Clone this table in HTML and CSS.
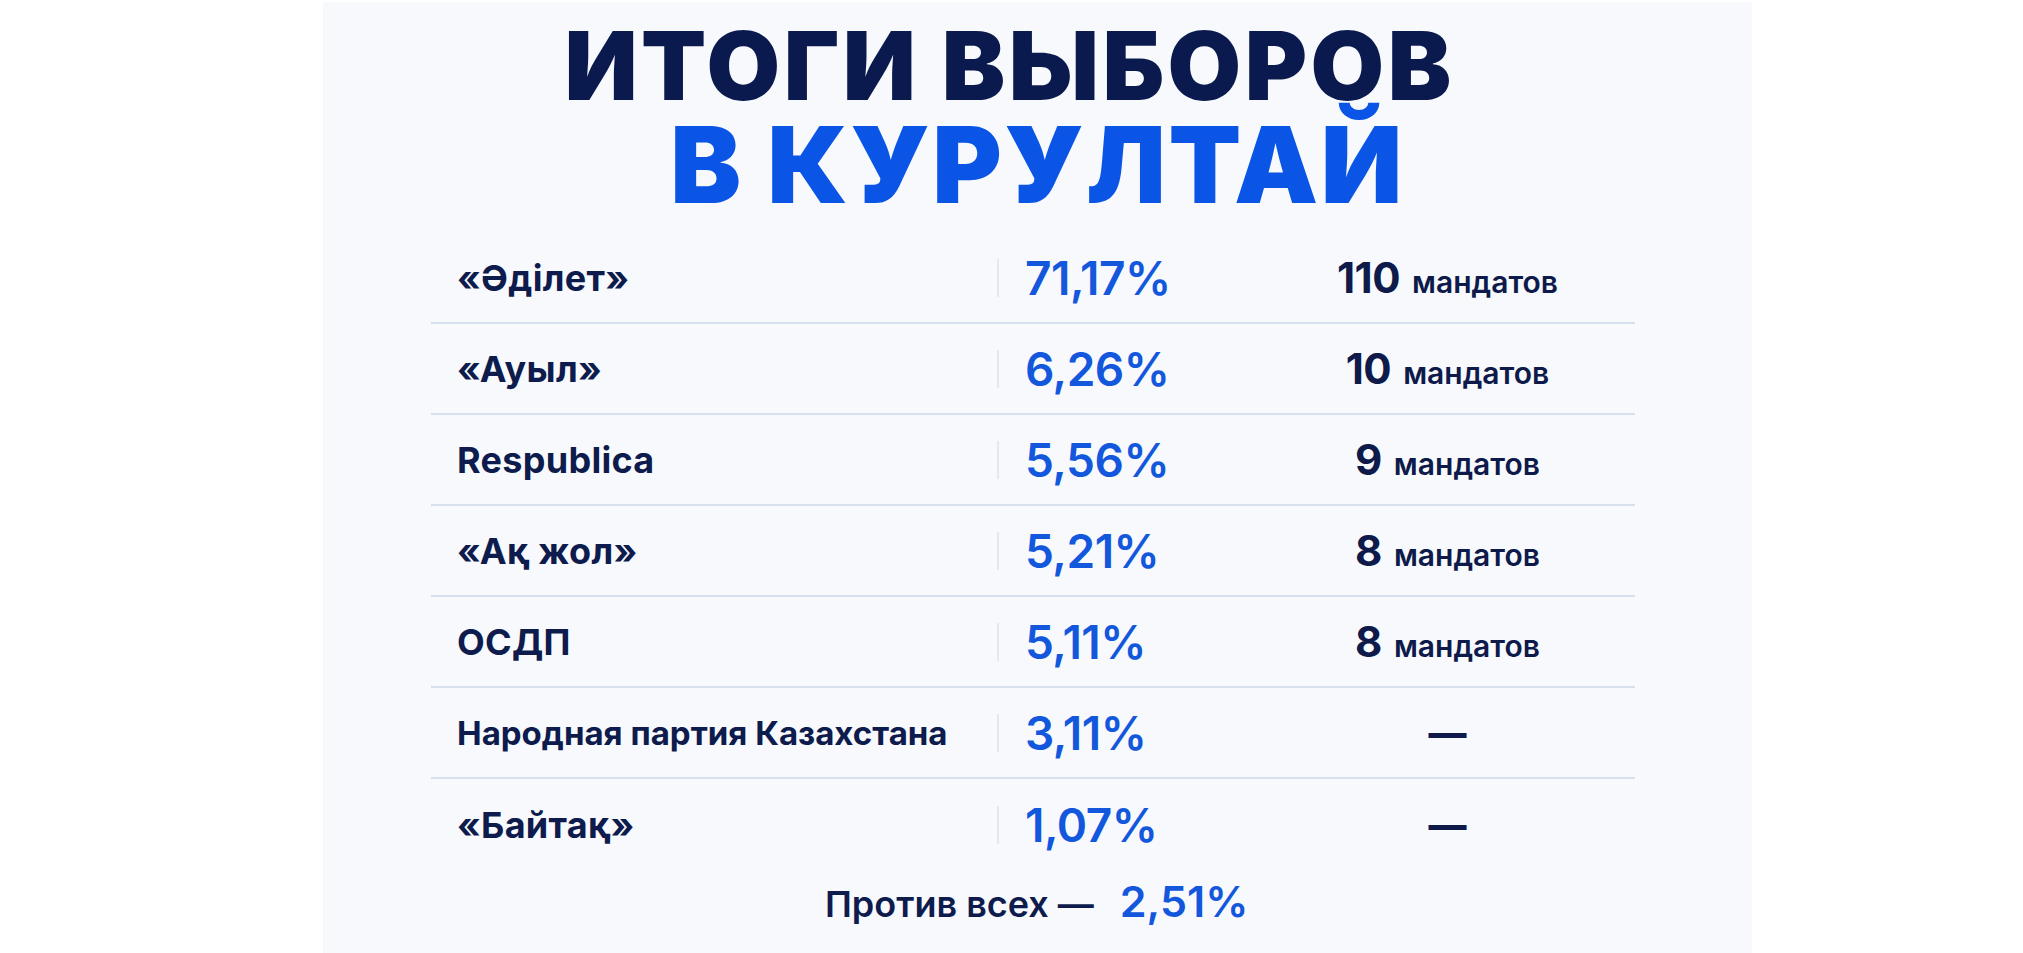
FILE: index.html
```html
<!DOCTYPE html>
<html lang="ru">
<head>
<meta charset="utf-8">
<title>Итоги выборов в Курултай</title>
<link rel="stylesheet" href="styles.css">
</head>
<body>
<div class="page">
  <main class="panel">
    <h1 class="title">
      <span class="title-line1">ИТОГИ ВЫБОРОВ</span>
      <span class="title-line2">В КУРУЛТАЙ</span>
    </h1>
    <div class="results">
      <div class="row">
        <div class="party">«Әділет»</div>
        <div class="pct">71,17%</div>
        <div class="seats"><span class="num">110</span><span class="word">мандатов</span></div>
      </div>
      <div class="row">
        <div class="party">«Ауыл»</div>
        <div class="pct">6,26%</div>
        <div class="seats"><span class="num">10</span><span class="word">мандатов</span></div>
      </div>
      <div class="row">
        <div class="party">Respublica</div>
        <div class="pct">5,56%</div>
        <div class="seats"><span class="num">9</span><span class="word">мандатов</span></div>
      </div>
      <div class="row">
        <div class="party">«Ақ жол»</div>
        <div class="pct">5,21%</div>
        <div class="seats"><span class="num">8</span><span class="word">мандатов</span></div>
      </div>
      <div class="row">
        <div class="party">ОСДП</div>
        <div class="pct">5,11%</div>
        <div class="seats"><span class="num">8</span><span class="word">мандатов</span></div>
      </div>
      <div class="row">
        <div class="party party--long">Народная партия Казахстана</div>
        <div class="pct">3,11%</div>
        <div class="seats"><span class="dash">—</span></div>
      </div>
      <div class="row">
        <div class="party">«Байтақ»</div>
        <div class="pct">1,07%</div>
        <div class="seats"><span class="dash">—</span></div>
      </div>
    </div>
    <p class="against"><span class="against-label">Против всех —</span><span class="against-pct">2,51%</span></p>
  </main>
</div>
</body>
</html>
```

FILE: styles.css
```css
html, body {
  margin: 0;
  padding: 0;
  background: #ffffff;
}

body {
  font-family: "Inter", "Liberation Sans", sans-serif;
  color: #0d1b4d;
}

.page {
  padding: 2px 0 0 323px;
}

.panel {
  width: 1429px;
  min-height: 951px;
  background: #f7f9fc;
  padding-top: 16px;
  box-sizing: border-box;
}

.title {
  margin: 0;
  font-family: "Inter", "Roboto", sans-serif;
  font-weight: 900;
  text-align: center;
}

.title-line1 {
  display: block;
  font-size: 95px;
  line-height: 95px;
  color: #0a1a4e;
  letter-spacing: 3.5px;
  padding-right: 56px;
}

.title-line2 {
  display: block;
  margin-top: 2px;
  font-size: 106px;
  line-height: 100px;
  color: #0a55e6;
  letter-spacing: 2.5px;
}

.results {
  margin: 18px 0 0 108px;
  width: 1204px;
}

.row {
  display: grid;
  grid-template-columns: 566px 263px 375px;
  align-items: center;
  height: 91px;
  box-sizing: border-box;
  border-bottom: 2px solid #d6e0ef;
}

.row:last-child {
  border-bottom: none;
}

.party {
  padding-left: 26px;
  font-size: 36px;
  font-weight: 700;
  letter-spacing: 0.3px;
  color: #0d1b4d;
}

.party--long {
  font-size: 33px;
  letter-spacing: 0;
}

.pct {
  position: relative;
  padding-left: 28px;
  font-size: 46px;
  font-weight: 600;
  color: #1257dc;
  letter-spacing: -0.5px;
}

.pct::before {
  content: "";
  position: absolute;
  left: 0;
  top: 50%;
  width: 2px;
  height: 38px;
  margin-top: -19px;
  background: #e3e8f1;
}

.seats {
  display: flex;
  justify-content: center;
  align-items: baseline;
  gap: 12px;
  color: #0d1a4a;
  white-space: nowrap;
}

.num {
  font-size: 42px;
  font-weight: 700;
  letter-spacing: -0.5px;
}

.word {
  font-size: 30px;
  font-weight: 600;
}

.dash {
  font-size: 38px;
  font-weight: 800;
}

.against {
  margin: 11px 0 0 0;
  padding-left: 502px;
  line-height: 40px;
  white-space: nowrap;
}

.against-label {
  font-size: 36px;
  font-weight: 600;
  color: #0d1b4d;
}

.against-pct {
  margin-left: 26px;
  font-size: 43px;
  font-weight: 600;
  color: #1257dc;
}
```
